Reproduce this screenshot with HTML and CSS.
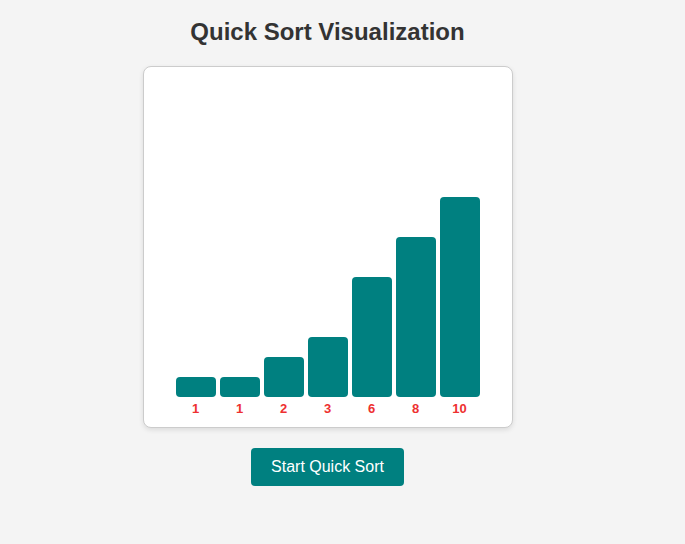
FILE: index.html
```html
<!DOCTYPE html>
<html>
<head>
<meta charset="utf-8">
<link rel="stylesheet" href="styles.css">
</head>
<body>
<h1 class="title">Quick Sort Visualization</h1>
<div class="chart">
  <div class="bar" style="height:20px"><span class="label">1</span></div>
  <div class="bar" style="height:20px"><span class="label">1</span></div>
  <div class="bar" style="height:40px"><span class="label">2</span></div>
  <div class="bar" style="height:60px"><span class="label">3</span></div>
  <div class="bar" style="height:120px"><span class="label">6</span></div>
  <div class="bar" style="height:160px"><span class="label">8</span></div>
  <div class="bar" style="height:200px"><span class="label">10</span></div>
</div>
<button class="start">Start Quick Sort</button>
</body>
</html>
```
FILE: styles.css
```css
html, body {
  margin: 0;
  background: #f4f4f4;
}
body {
  font-family: "Liberation Sans", Arial, sans-serif;
  display: flex;
  flex-direction: column;
  align-items: center;
  padding: 0 30px 0 0;
}
.title {
  font-size: 24px;
  font-weight: bold;
  color: #333;
  margin: 18px 0 20px;
}
.chart {
  display: flex;
  align-items: flex-end;
  height: 300px;
  padding: 30px;
  background: #fff;
  border: 1px solid #ccc;
  border-radius: 8px;
  box-shadow: 0 2px 5px rgba(0, 0, 0, 0.1);
}
.bar {
  position: relative;
  width: 40px;
  margin: 0 2px;
  background: #008080;
  border-radius: 4px;
}
.label {
  position: absolute;
  left: 0;
  right: 0;
  top: 100%;
  margin-top: 4px;
  text-align: center;
  font-size: 13px;
  font-weight: bold;
  color: #ee3030;
}
.start {
  margin-top: 20px;
  padding: 10px 20px;
  font-family: "Liberation Sans", Arial, sans-serif;
  font-size: 16px;
  color: #fff;
  background: #008080;
  border: none;
  border-radius: 4px;
}
```
